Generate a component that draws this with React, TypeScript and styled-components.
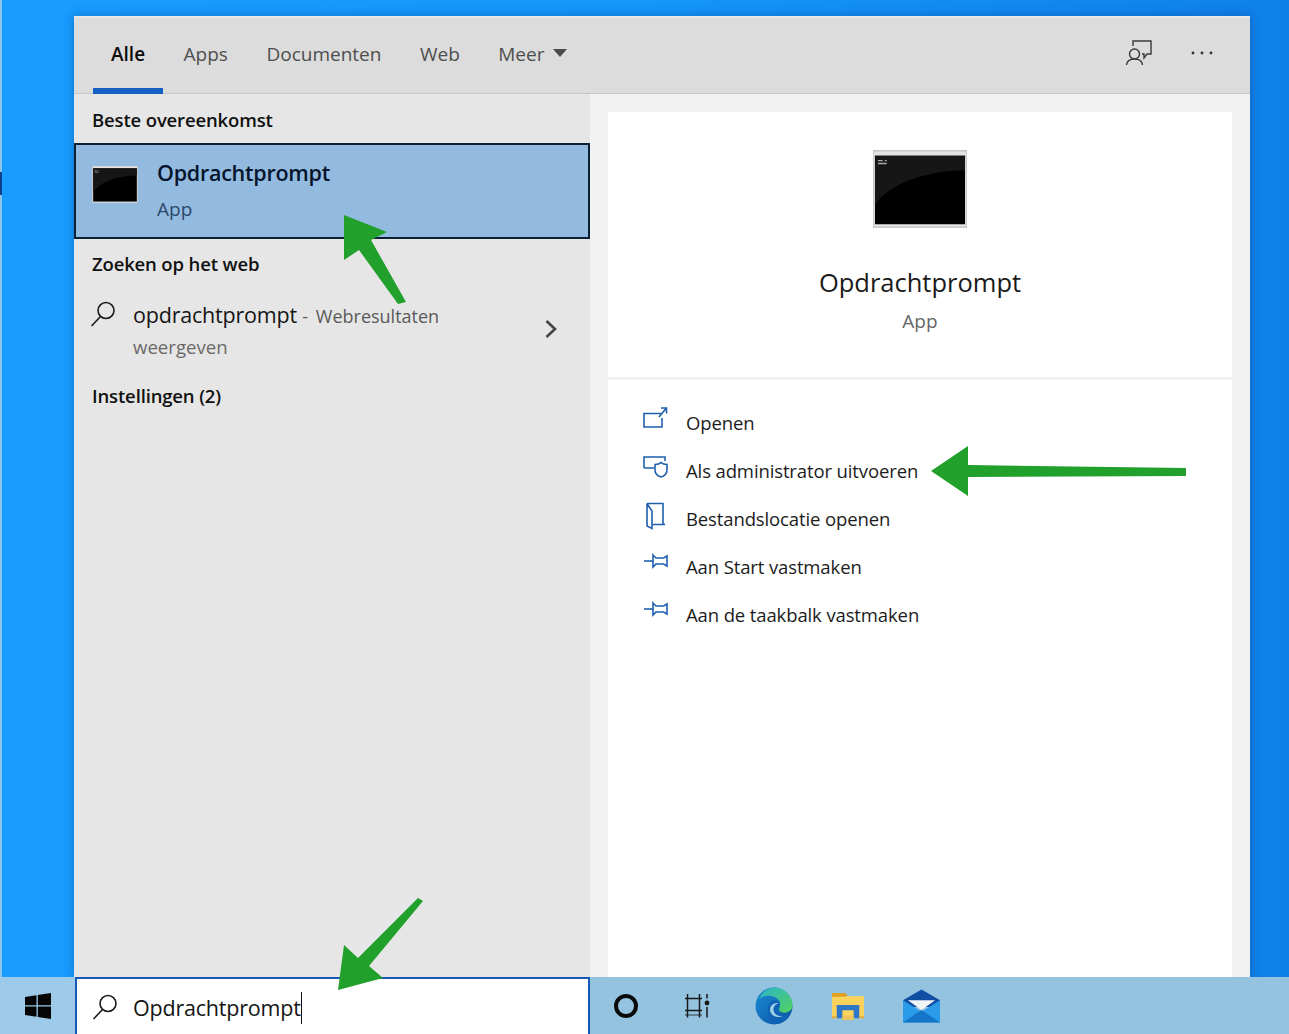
import React from 'react';
import styled, { createGlobalStyle } from 'styled-components';

const GlobalStyle = createGlobalStyle`
  html, body {
    margin: 0;
    padding: 0;
    overflow: hidden;
  }
  body {
    font-family: "Open Sans", "Noto Sans", sans-serif;
  }
`;

const Desktop = styled.div`
  position: relative;
  width: 1289px;
  height: 1034px;
  display: flex;
  flex-direction: column;
  overflow: hidden;
  background: linear-gradient(90deg, #189cff 0%, #1496fa 50%, #0f80ea 100%);
  &::before {
    content: '';
    position: absolute;
    left: 0;
    top: 0;
    bottom: 57px;
    width: 2px;
    background: linear-gradient(180deg, #8fc4ea 0 172px, #0d3f8a 172px 195px, #8fc4ea 195px);
  }
`;

const SearchWindow = styled.div`
  flex: 1;
  min-height: 0;
  margin: 16px 39px 0 74px;
  display: flex;
  flex-direction: column;
  box-shadow: 0 0 10px rgba(0, 40, 90, 0.35);
`;

const TabBar = styled.div`
  height: 78px;
  flex-shrink: 0;
  display: flex;
  align-items: stretch;
  justify-content: space-between;
  padding: 0 36px 0 19px;
  background: #dcdcdc;
  border-top: 2px solid #e6e8ea;
  border-bottom: 1px solid #c6c6c6;
  box-sizing: border-box;
`;

const Tabs = styled.div`
  display: flex;
`;

const Tab = styled.div<{ $active?: boolean }>`
  position: relative;
  display: flex;
  align-items: center;
  gap: 9px;
  height: 72px;
  padding: 0 20.5px 0 18px;
  font-size: 19px;
  font-weight: ${(p) => (p.$active ? 600 : 400)};
  color: ${(p) => (p.$active ? '#0c0c0c' : '#4e4e4e')};
  &::after {
    content: '';
    display: ${(p) => (p.$active ? 'block' : 'none')};
    position: absolute;
    left: 0;
    right: 2.5px;
    bottom: -4px;
    height: 6px;
    background: #1460c4;
  }
`;

const Caret = styled.span`
  width: 0;
  height: 0;
  border-left: 7px solid transparent;
  border-right: 7px solid transparent;
  border-top: 8px solid #4a4a4a;
  margin-top: -3px;
`;

const TabActions = styled.div`
  display: flex;
  align-items: center;
  gap: 37px;
  padding-bottom: 5px;
`;

const Body = styled.div`
  flex: 1;
  min-height: 0;
  display: flex;
`;

const LeftPane = styled.div`
  width: 516px;
  flex-shrink: 0;
  background: #e6e6e6;
  display: flex;
  flex-direction: column;
`;

const GroupHeading = styled.div`
  font-size: 18.5px;
  font-weight: 600;
  letter-spacing: -0.15px;
  color: #111;
  padding-left: 18px;
  height: 49px;
  line-height: 52px;
`;

const BestMatch = styled.div`
  height: 96px;
  box-sizing: border-box;
  border: 2px solid #0d1f33;
  background: #93bbe0;
  display: flex;
  align-items: flex-start;
  padding: 12px 0 0 16px;
  gap: 19px;
`;

const BestMatchIcon = styled.div`
  padding-top: 9px;
`;

const BestMatchText = styled.div`
  display: flex;
  flex-direction: column;
`;

const BestMatchTitle = styled.div`
  font-size: 21.5px;
  font-weight: 600;
  line-height: 32px;
  color: #06142c;
  letter-spacing: -0.25px;
`;

const BestMatchSub = styled.div`
  font-size: 19px;
  line-height: 26px;
  margin-top: 7px;
  color: #2c4868;
`;

const WebHeading = styled(GroupHeading)`
  height: 51px;
  line-height: 50px;
`;

const SettingsHeading = styled(GroupHeading)`
  line-height: 50px;
`;

const WebRow = styled.div`
  display: flex;
  align-items: flex-start;
  padding: 0 32px 0 15px;
  height: 81px;
`;

const WebIcon = styled.div`
  width: 44px;
  flex-shrink: 0;
  padding-top: 10px;
`;

const WebText = styled.div`
  flex: 1;
`;

const WebLine = styled.div`
  font-size: 21.5px;
  line-height: 32px;
  color: #161616;
  letter-spacing: -0.2px;
  white-space: nowrap;
  padding-top: 9px;
`;

const WebMuted = styled.span`
  font-size: 18px;
  letter-spacing: 0;
  word-spacing: 3px;
  color: #5a5a5a;
`;

const WebLineTwo = styled.div`
  font-size: 18.6px;
  line-height: 26px;
  margin-top: 2px;
  color: #6a6a6a;
`;

const WebChevron = styled.div`
  align-self: center;
  margin-top: 2px;
`;

const RightPane = styled.div`
  flex: 1;
  background: #f2f2f2;
  padding: 18px 18px 0;
  display: flex;
  flex-direction: column;
  gap: 3px;
`;

const AppCard = styled.div`
  height: 265px;
  flex-shrink: 0;
  background: #fff;
  display: flex;
  flex-direction: column;
  align-items: center;
  padding-top: 38px;
  box-sizing: border-box;
`;

const AppTitle = styled.div`
  margin-top: 36px;
  font-size: 25.5px;
  line-height: 36px;
  color: #1a1a1a;
`;

const AppSub = styled.div`
  margin-top: 8px;
  font-size: 19px;
  line-height: 26px;
  color: #666;
`;

const ActionsCard = styled.div`
  flex: 1;
  background: #fff;
  padding: 18px 0 0 34px;
  display: flex;
  flex-direction: column;
`;

const ActionRow = styled.div`
  height: 48px;
  display: flex;
  align-items: center;
  gap: 16px;
  font-size: 18.5px;
  letter-spacing: -0.12px;
  color: #1c1c1c;
`;

const ActionIcon = styled.div`
  width: 28px;
  height: 28px;
  margin-top: -5px;
  flex-shrink: 0;
`;

const Taskbar = styled.div`
  height: 57px;
  flex-shrink: 0;
  display: flex;
  align-items: stretch;
  background: #93c3df;
`;

const StartButton = styled.div`
  width: 75px;
  flex-shrink: 0;
  display: flex;
  align-items: center;
  justify-content: center;
  background: #9ccae8;
`;

const SearchBox = styled.div`
  width: 515px;
  flex-shrink: 0;
  box-sizing: border-box;
  background: #fff;
  border: 2px solid #1558b8;
  border-bottom: none;
  display: flex;
  align-items: center;
  gap: 14px;
  padding-left: 14px;
`;

const SearchText = styled.div`
  font-size: 21.5px;
  line-height: 32px;
  color: #141414;
  letter-spacing: -0.2px;
  border-right: 1.5px solid #111;
  margin-top: 2px;
`;

const TrayIcons = styled.div`
  display: flex;
  align-items: center;
`;

const TrayCell = styled.div<{ $width: number }>`
  width: ${(p) => p.$width}px;
  display: flex;
  justify-content: center;
  align-items: center;
`;

const ArrowLayer = styled.svg`
  position: absolute;
  inset: 0;
  pointer-events: none;
`;

const TerminalIcon = ({ size }: { size: 'small' | 'large' }) => {
  const w = size === 'large' ? 94 : 46;
  const h = size === 'large' ? 78 : 37;
  return (
    <svg width={w} height={h} viewBox="0 0 96 78">
      <rect x="0" y="0" width="96" height="78" fill="#e4e4e4" stroke="#b0b0b0" strokeWidth="1" />
      <rect x="2" y="5" width="92" height="70" fill="#000" />
      <path d="M2 5H94V20C60 20 24 30 6 50L2 55Z" fill="#161616" />
      <path d="M5 10h5M12 10h2M5 13h9" stroke="#aaa" strokeWidth="1.4" />
    </svg>
  );
};

const SearchGlyph = () => (
  <svg width="28" height="28" viewBox="0 0 28 28" fill="none" stroke="#1b1b1b" strokeWidth="1.6">
    <circle cx="17" cy="10.5" r="8" />
    <path d="M11.5 16.5L2.5 26" />
  </svg>
);

const FeedbackGlyph = () => (
  <svg width="28" height="28" viewBox="0 0 28 28" fill="none" stroke="#3a3a3a" strokeWidth="1.4">
    <path d="M8 7V2H26V15H22L19 19V15H17" />
    <circle cx="9.5" cy="15" r="5" />
    <path d="M1.5 26C2 21.5 5 20 9.5 20S17 21.5 17.5 26" />
  </svg>
);

const DotsGlyph = () => (
  <svg width="24" height="6" viewBox="0 0 24 6" fill="#333">
    <circle cx="3" cy="3" r="1.4" />
    <circle cx="12" cy="3" r="1.4" />
    <circle cx="21" cy="3" r="1.4" />
  </svg>
);

const ChevronGlyph = () => (
  <svg width="14" height="20" viewBox="0 0 14 20" fill="none" stroke="#444" strokeWidth="2.6">
    <path d="M2.5 2L11 10L2.5 18" />
  </svg>
);

const OpenGlyph = () => (
  <svg width="28" height="28" viewBox="0 0 28 28" fill="none" stroke="#1f5fae" strokeWidth="1.6">
    <path d="M19 7.5H2V21H20V12" />
    <path d="M17 11L24 2.5M19 2H24.5V7.5" />
  </svg>
);

const AdminGlyph = () => (
  <svg width="28" height="28" viewBox="0 0 28 28" fill="none" stroke="#1f5fae" strokeWidth="1.6">
    <path d="M2 14V3H23V7M2 14H12" />
    <path d="M19 8.5C17.5 10 15.5 10.5 13 10.5V16C13 19.5 16 22 19 23C22 22 25 19.5 25 16V10.5C22.5 10.5 20.5 10 19 8.5Z" />
  </svg>
);

const FolderGlyph = () => (
  <svg width="28" height="28" viewBox="0 0 28 28" fill="none" stroke="#1f5fae" strokeWidth="1.6">
    <path d="M5 1.5H21V22L23 22.5H10.5" />
    <path d="M5 1.5V24L10 26.5V9L5 1.5" />
  </svg>
);

const PinGlyph = () => (
  <svg width="28" height="28" viewBox="0 0 28 28" fill="none" stroke="#1f5fae" strokeWidth="1.6">
    <path d="M2 11H11" />
    <path d="M11 5L14 8H21.5L25 6V16L21.5 14H14L11 17Z" />
  </svg>
);

const WindowsLogo = () => (
  <svg width="26" height="26" viewBox="0 0 26 26" fill="#050505">
    <path d="M0 4L11.5 2.2V12.2H0Z" />
    <path d="M12.8 2L26 0V12.2H12.8Z" />
    <path d="M0 13.6H11.5V23.7L0 22Z" />
    <path d="M12.8 13.6H26V26L12.8 23.9Z" />
  </svg>
);

const CortanaGlyph = () => (
  <svg width="26" height="26" viewBox="0 0 26 26" fill="none" stroke="#0a0a0a" strokeWidth="4">
    <circle cx="13" cy="13" r="10" />
  </svg>
);

const TaskViewGlyph = () => (
  <svg width="26" height="26" viewBox="0 0 26 26" fill="none" stroke="#1a1a1a" strokeWidth="1.5">
    <path d="M3.5 1V24.5M15.5 1V24.5" />
    <path d="M1 5.5H18M1 17.5H18" />
    <path d="M1 22H18" strokeWidth="0.8" />
    <path d="M23 1V5.5M23 14V24.5" />
    <circle cx="23" cy="10" r="2.4" fill="#1a1a1a" stroke="none" />
  </svg>
);

const EdgeLogo = () => (
  <svg width="38" height="38" viewBox="0 0 38 38">
    <defs>
      <linearGradient id="edgeBlue" x1="0" y1="0" x2="1" y2="1">
        <stop offset="0" stopColor="#1a8fd8" />
        <stop offset="1" stopColor="#0c4f9e" />
      </linearGradient>
      <linearGradient id="edgeGreen" x1="0" y1="0" x2="1" y2="1">
        <stop offset="0" stopColor="#2fb5c8" />
        <stop offset="1" stopColor="#52d25e" />
      </linearGradient>
    </defs>
    <circle cx="19" cy="19" r="18.5" fill="url(#edgeBlue)" />
    <path d="M4 12C8 3 16 0 21 .6C30 1.5 37.5 9 37.5 19C37.5 24 31 27 26 25C22 23.4 26 19 25 15.5C23 9 10 6 4 12Z" fill="url(#edgeGreen)" />
    <path d="M13 21C13 14 20 12 24 15C26.5 17 24 19.5 22 21C20 22.5 21 26 25 27.5C29 29 33.5 28 36 26C33 33 26 37.5 20 37C14 36 13 28 13 21Z" fill="#0f62b4" />
    <path d="M15 23C15 18 19 15.5 24 16C21 17 18.5 19 18.5 22.5C18.5 27 23 29.5 28 29.5C24 31 15.5 30 15 23Z" fill="#9ccfe6" />
  </svg>
);

const FolderLogo = () => (
  <svg width="32" height="30" viewBox="0 0 34 32">
    <path d="M0 2H14L17 5.5H0Z" fill="#d99b1e" />
    <path d="M0 5.5H34V29H0Z" fill="#fbd35c" />
    <path d="M0 2H12L15 6H0Z" fill="#e0a020" />
    <path d="M5 15H29V29H23V20.5H11V29H5Z" fill="#2d79c7" />
    <path d="M0 27H5V29H0ZM29 27H34V29H29Z" fill="#e3a93c" />
    <rect x="11" y="26" width="12" height="5" fill="#ecc45a" />
  </svg>
);

const MailLogo = () => (
  <svg width="37" height="34" viewBox="0 0 38 34">
    <path d="M0 11L19 0L38 11V18H0Z" fill="#0f4ea3" />
    <path d="M5 11H33L19 21Z" fill="#f2f5f8" />
    <path d="M0 11L19 23L38 11V34H0Z" fill="#2a9be8" />
    <path d="M0 34L19 21L38 34Z" fill="#1474c8" />
  </svg>
);

const actions = [
  { label: 'Openen', icon: <OpenGlyph /> },
  { label: 'Als administrator uitvoeren', icon: <AdminGlyph /> },
  { label: 'Bestandslocatie openen', icon: <FolderGlyph /> },
  { label: 'Aan Start vastmaken', icon: <PinGlyph /> },
  { label: 'Aan de taakbalk vastmaken', icon: <PinGlyph /> },
];

const App: React.FC = () => {
  return (
    <>
      <GlobalStyle />
      <Desktop>
        <SearchWindow>
          <TabBar>
            <Tabs>
              <Tab $active>Alle</Tab>
              <Tab>Apps</Tab>
              <Tab>Documenten</Tab>
              <Tab>Web</Tab>
              <Tab>
                Meer <Caret />
              </Tab>
            </Tabs>
            <TabActions>
              <FeedbackGlyph />
              <DotsGlyph />
            </TabActions>
          </TabBar>
          <Body>
            <LeftPane>
              <GroupHeading>Beste overeenkomst</GroupHeading>
              <BestMatch>
                <BestMatchIcon>
                  <TerminalIcon size="small" />
                </BestMatchIcon>
                <BestMatchText>
                  <BestMatchTitle>Opdrachtprompt</BestMatchTitle>
                  <BestMatchSub>App</BestMatchSub>
                </BestMatchText>
              </BestMatch>
              <WebHeading>Zoeken op het web</WebHeading>
              <WebRow>
                <WebIcon>
                  <SearchGlyph />
                </WebIcon>
                <WebText>
                  <WebLine>
                    opdrachtprompt <WebMuted>- Webresultaten</WebMuted>
                  </WebLine>
                  <WebLineTwo>weergeven</WebLineTwo>
                </WebText>
                <WebChevron>
                  <ChevronGlyph />
                </WebChevron>
              </WebRow>
              <SettingsHeading>Instellingen (2)</SettingsHeading>
            </LeftPane>
            <RightPane>
              <AppCard>
                <TerminalIcon size="large" />
                <AppTitle>Opdrachtprompt</AppTitle>
                <AppSub>App</AppSub>
              </AppCard>
              <ActionsCard>
                {actions.map((a) => (
                  <ActionRow key={a.label}>
                    <ActionIcon>{a.icon}</ActionIcon>
                    {a.label}
                  </ActionRow>
                ))}
              </ActionsCard>
            </RightPane>
          </Body>
        </SearchWindow>
        <Taskbar>
          <StartButton>
            <WindowsLogo />
          </StartButton>
          <SearchBox>
            <SearchGlyph />
            <SearchText>Opdrachtprompt</SearchText>
          </SearchBox>
          <TrayIcons>
            <TrayCell $width={72}><CortanaGlyph /></TrayCell>
            <TrayCell $width={70}><TaskViewGlyph /></TrayCell>
            <TrayCell $width={84}><EdgeLogo /></TrayCell>
            <TrayCell $width={64}><FolderLogo /></TrayCell>
            <TrayCell $width={82}><MailLogo /></TrayCell>
          </TrayIcons>
        </Taskbar>
        <ArrowLayer width="1289" height="1034" viewBox="0 0 1289 1034" fill="#22a02c">
          <path d="M344 215L387 232L371 240L406 302L398 304L359 250L344 260Z" />
          <path d="M931 471L968 446V465L1186 468V476L968 477V496Z" />
          <path d="M338 990L344 945L358 958L418 898L423 901L369 966L383 978Z" />
        </ArrowLayer>
      </Desktop>
    </>
  );
};

export default App;
